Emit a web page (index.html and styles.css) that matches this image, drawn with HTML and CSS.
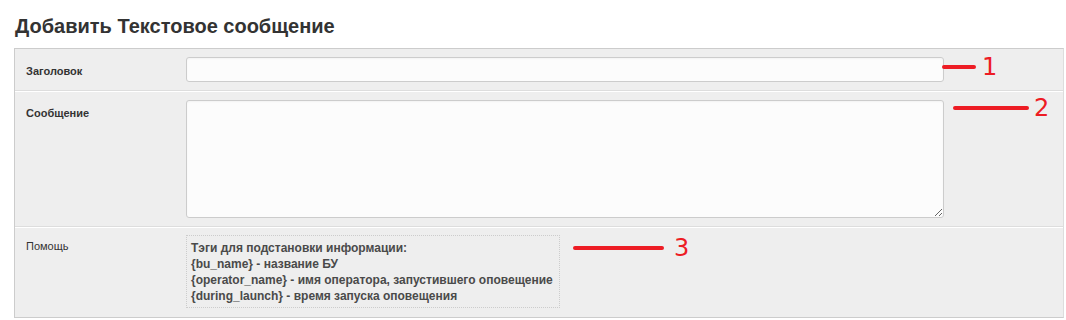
FILE: index.html
```html
<!DOCTYPE html>
<html lang="ru">
<head>
    <meta charset="UTF-8">
    <title>Добавить Текстовое сообщение</title>
    <link rel="stylesheet" href="styles.css">
</head>
<body>
    <div class="page">
        <h1 class="page-title">Добавить Текстовое сообщение</h1>

        <div class="form-panel">
            <div class="form-row row-title">
                <label class="form-label" for="title">Заголовок</label>
                <div class="form-field">
                    <input type="text" id="title" class="text-input">
                </div>
            </div>

            <div class="form-row row-message">
                <label class="form-label" for="message">Сообщение</label>
                <div class="form-field">
                    <textarea id="message" class="text-area"></textarea>
                </div>
            </div>

            <div class="form-row row-help">
                <div class="form-label plain">Помощь</div>
                <div class="form-field">
                    <div class="help-box">
                        Тэги для подстановки информации:<br>
                        {bu_name} - название БУ<br>
                        {operator_name} - имя оператора, запустившего оповещение<br>
                        {during_launch} - время запуска оповещения
                    </div>
                </div>
            </div>
        </div>

        <!-- пометки поверх скриншота -->
        <div class="mark mark-1"><span class="mark-line"></span><span class="mark-num">1</span></div>
        <div class="mark mark-2"><span class="mark-line"></span><span class="mark-num">2</span></div>
        <div class="mark mark-3"><span class="mark-line"></span><span class="mark-num">3</span></div>
    </div>
</body>
</html>
```
FILE: styles.css
```css
body {
    margin: 0;
    padding: 0;
    background: #fff;
    font-family: 'Liberation Sans', Arial, sans-serif;
    color: #333;
}

.page {
    position: relative;
    padding: 14px 2px 0 14px;
}

.page-title {
    margin: 0 0 10px 1px;
    font-size: 20px;
    line-height: 24px;
    font-weight: bold;
    color: #333;
}

.form-panel {
    width: 1048px;
    background: #eee;
    border: 1px solid #ccc;
    border-right-color: #ddd;
}

.form-row {
    display: flex;
    align-items: flex-start;
    padding: 8px 0;
    border-bottom: 1px solid #ddd;
    box-shadow: 0 1px 0 #fff;
}

.form-row:last-child {
    border-bottom: none;
    box-shadow: none;
}

.row-message {
    padding-top: 9px;
    padding-bottom: 8px;
}

.row-help {
    padding-bottom: 9px;
}

.form-label {
    flex: 0 0 160px;
    padding: 6px 0 0 11px;
    font-size: 11px;
    line-height: 16px;
    font-weight: bold;
    color: #333;
}

.row-message .form-label {
    padding-top: 5px;
}

.row-help .form-label {
    padding-top: 3px;
}

.form-label.plain {
    font-weight: normal;
}

.form-field {
    flex: 1;
}

.text-input,
.text-area {
    display: block;
    box-sizing: border-box;
    width: 758px;
    margin: 0;
    background: #fcfcfc;
    border: 1px solid #ccc;
    border-radius: 3px;
    box-shadow: inset 0 1px 2px rgba(0,0,0,0.04);
    font-family: 'Liberation Sans', Arial, sans-serif;
    font-size: 12px;
}

.text-input {
    height: 25px;
}

.text-area {
    height: 118px;
    resize: both;
}

.help-box {
    display: inline-block;
    padding: 4px 6px 3px 4px;
    border: 1px dotted #ccc;
    font-size: 12px;
    line-height: 16px;
    font-weight: bold;
    color: #4a4a4a;
}

.mark {
    position: absolute;
    display: flex;
    align-items: center;
    height: 24px;
}

.mark-line {
    display: block;
    height: 4px;
    background: #ed1c24;
    border-radius: 2px;
}

.mark-num {
    font-family: 'DejaVu Sans', sans-serif;
    font-size: 24px;
    line-height: 24px;
    color: #ed1c24;
}

.mark-1 { left: 942px; top: 55px; gap: 6px; }
.mark-1 .mark-line { width: 34px; }

.mark-2 { left: 953px; top: 96px; gap: 5px; }
.mark-2 .mark-line { width: 76px; }

.mark-3 { left: 573px; top: 236px; gap: 10px; }
.mark-3 .mark-line { width: 91px; }
```
